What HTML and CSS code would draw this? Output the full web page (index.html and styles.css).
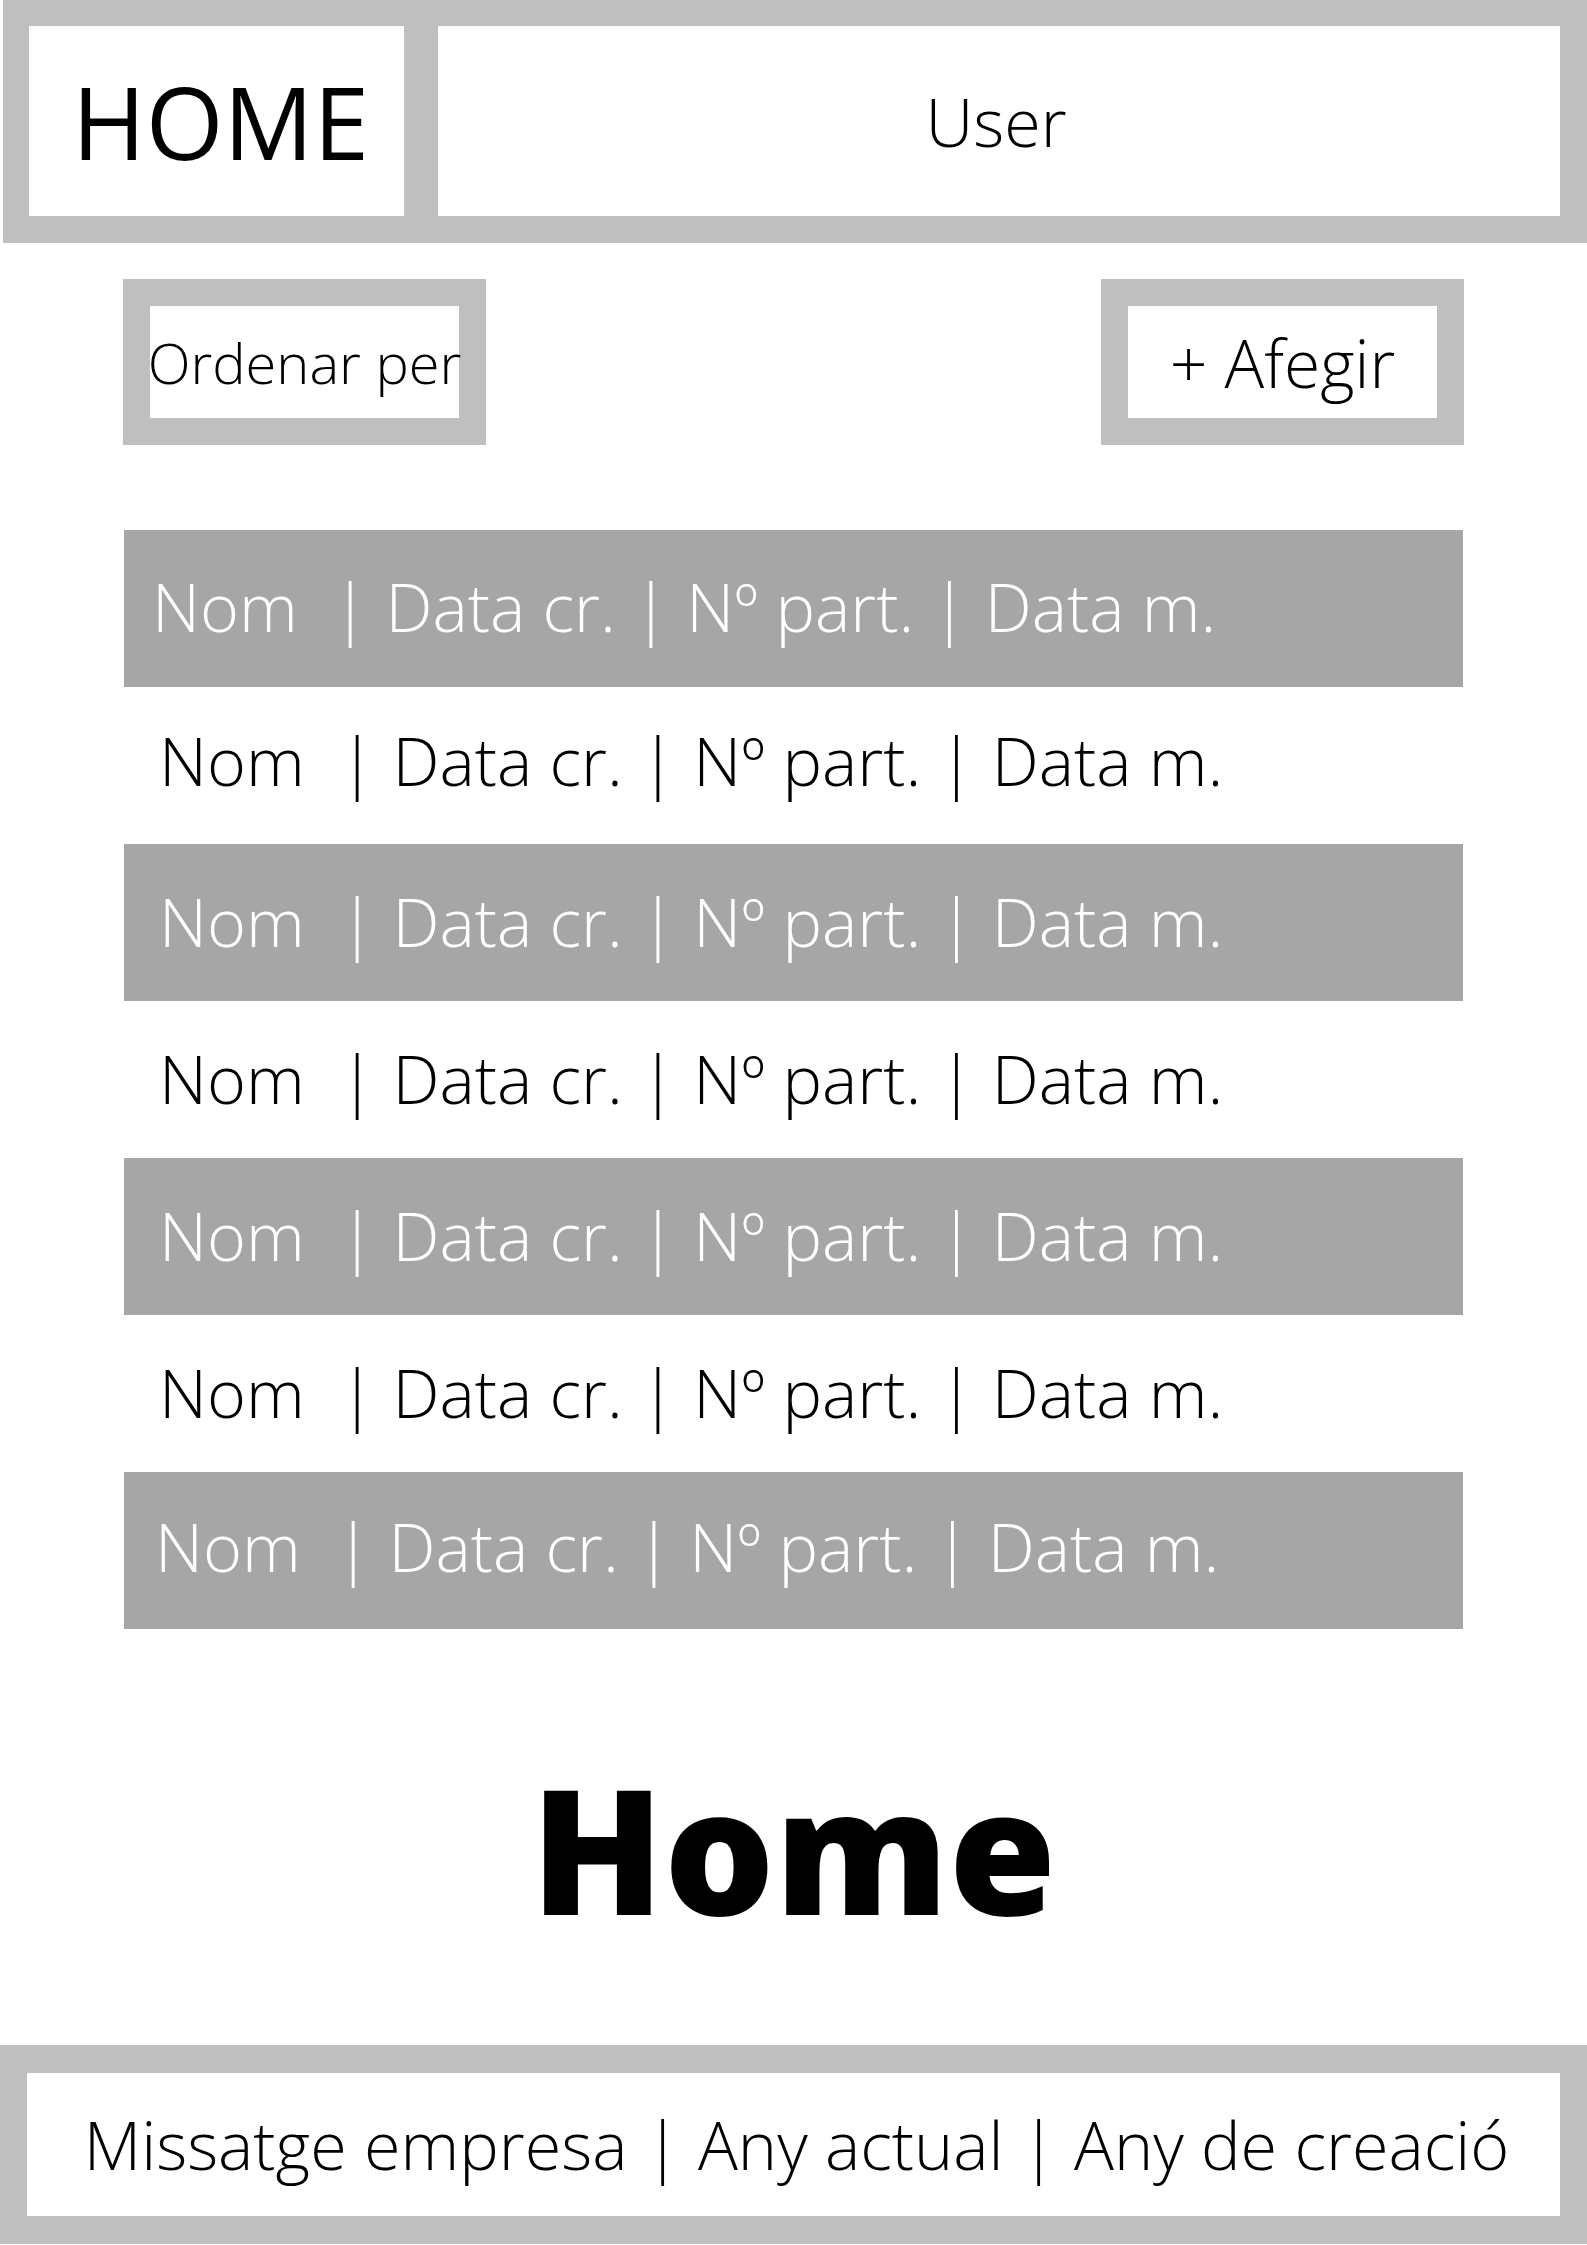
FILE: index.html
```html
<!DOCTYPE html>
<html lang="ca">
<head>
<meta charset="utf-8">
<title>Home</title>
<link rel="stylesheet" href="styles.css">
</head>
<body>
<header class="topbar">
  <div class="brand">HOME</div>
  <div class="user">User</div>
</header>
<main class="content">
  <div class="toolbar">
    <button class="btn btn-sort"><span>Ordenar per</span></button>
    <button class="btn btn-add"><span>+ Afegir</span></button>
  </div>
  <div class="table">
    <div class="row row-dark row-first">Nom &nbsp;| Data cr. | Nº part. | Data m.</div>
    <div class="row row-up">Nom &nbsp;| Data cr. | Nº part. | Data m.</div>
    <div class="row row-dark">Nom &nbsp;| Data cr. | Nº part. | Data m.</div>
    <div class="row">Nom &nbsp;| Data cr. | Nº part. | Data m.</div>
    <div class="row row-dark">Nom &nbsp;| Data cr. | Nº part. | Data m.</div>
    <div class="row">Nom &nbsp;| Data cr. | Nº part. | Data m.</div>
    <div class="row row-dark row-last">Nom &nbsp;| Data cr. | Nº part. | Data m.</div>
  </div>
  <h1 class="title">Home</h1>
</main>
<footer class="footer">
  <div class="footer-inner">Missatge empresa | Any actual | Any de creació</div>
</footer>
</body>
</html>
```
FILE: styles.css
```css
* { box-sizing: border-box; }
html, body { margin: 0; padding: 0; background: #ffffff; }
body {
  width: 1587px;
  font-family: "Open Sans", "Liberation Sans", sans-serif;
  color: #000;
}

.topbar {
  margin-left: 3px;
  height: 243px;
  background: #bfbfbf;
  display: flex;
  gap: 34px;
  padding: 26px 27px 27px 26px;
}
.brand {
  width: 375px;
  background: #fff;
  display: flex;
  align-items: center;
  justify-content: center;
  font-size: 100px;
  font-weight: 400;
  line-height: 1;
  padding-left: 8px;
}
.user {
  flex: 1;
  background: #fff;
  display: flex;
  align-items: center;
  justify-content: center;
  font-size: 66.5px;
  font-weight: 300;
  line-height: 1;
  padding-right: 6px;
}

.content {
  padding: 36px 0 0 124px;
  width: 1463px;
}
.toolbar {
  display: flex;
  justify-content: space-between;
  align-items: flex-start;
  width: 1340px;
}
.btn {
  width: 363px;
  height: 166px;
  border: 27px solid #bfbfbf;
  background: #fff;
  padding: 0;
  margin: 0;
  display: flex;
  align-items: center;
  justify-content: center;
  font-family: inherit;
  color: #000;
  font-weight: 300;
  line-height: 1;
  white-space: nowrap;
  overflow: visible;
}
.btn-sort { font-size: 56px; margin-left: -1px; }
.btn-add { font-size: 66px; }
.btn span { display: block; }

.table {
  margin-top: 85px;
  width: 1339px;
}
.row {
  height: 157px;
  display: flex;
  align-items: center;
  padding-left: 35px;
  padding-bottom: 3px;
  font-size: 66.5px;
  font-weight: 300;
  line-height: 1;
  white-space: nowrap;
  color: #000;
}
.row-dark { background: #a6a6a6; color: #fff; }
.row-first { padding-left: 28px; padding-bottom: 5px; }
.row-up { padding-bottom: 10px; }
.row-last { padding-left: 31px; padding-bottom: 8px; }

.title {
  margin: 132px 0 0 -124px;
  width: 1587px;
  text-align: center;
  font-size: 174px;
  font-weight: 800;
  line-height: 1;
  height: 174px;
}

.footer {
  margin-top: 110px;
  height: 199px;
  background: #bfbfbf;
  padding: 28px 27px 28px 27px;
}
.footer-inner {
  height: 143px;
  background: #fff;
  display: flex;
  align-items: center;
  justify-content: center;
  font-size: 66.5px;
  font-weight: 300;
  line-height: 1;
  white-space: nowrap;
  padding-left: 6px;
}
```
